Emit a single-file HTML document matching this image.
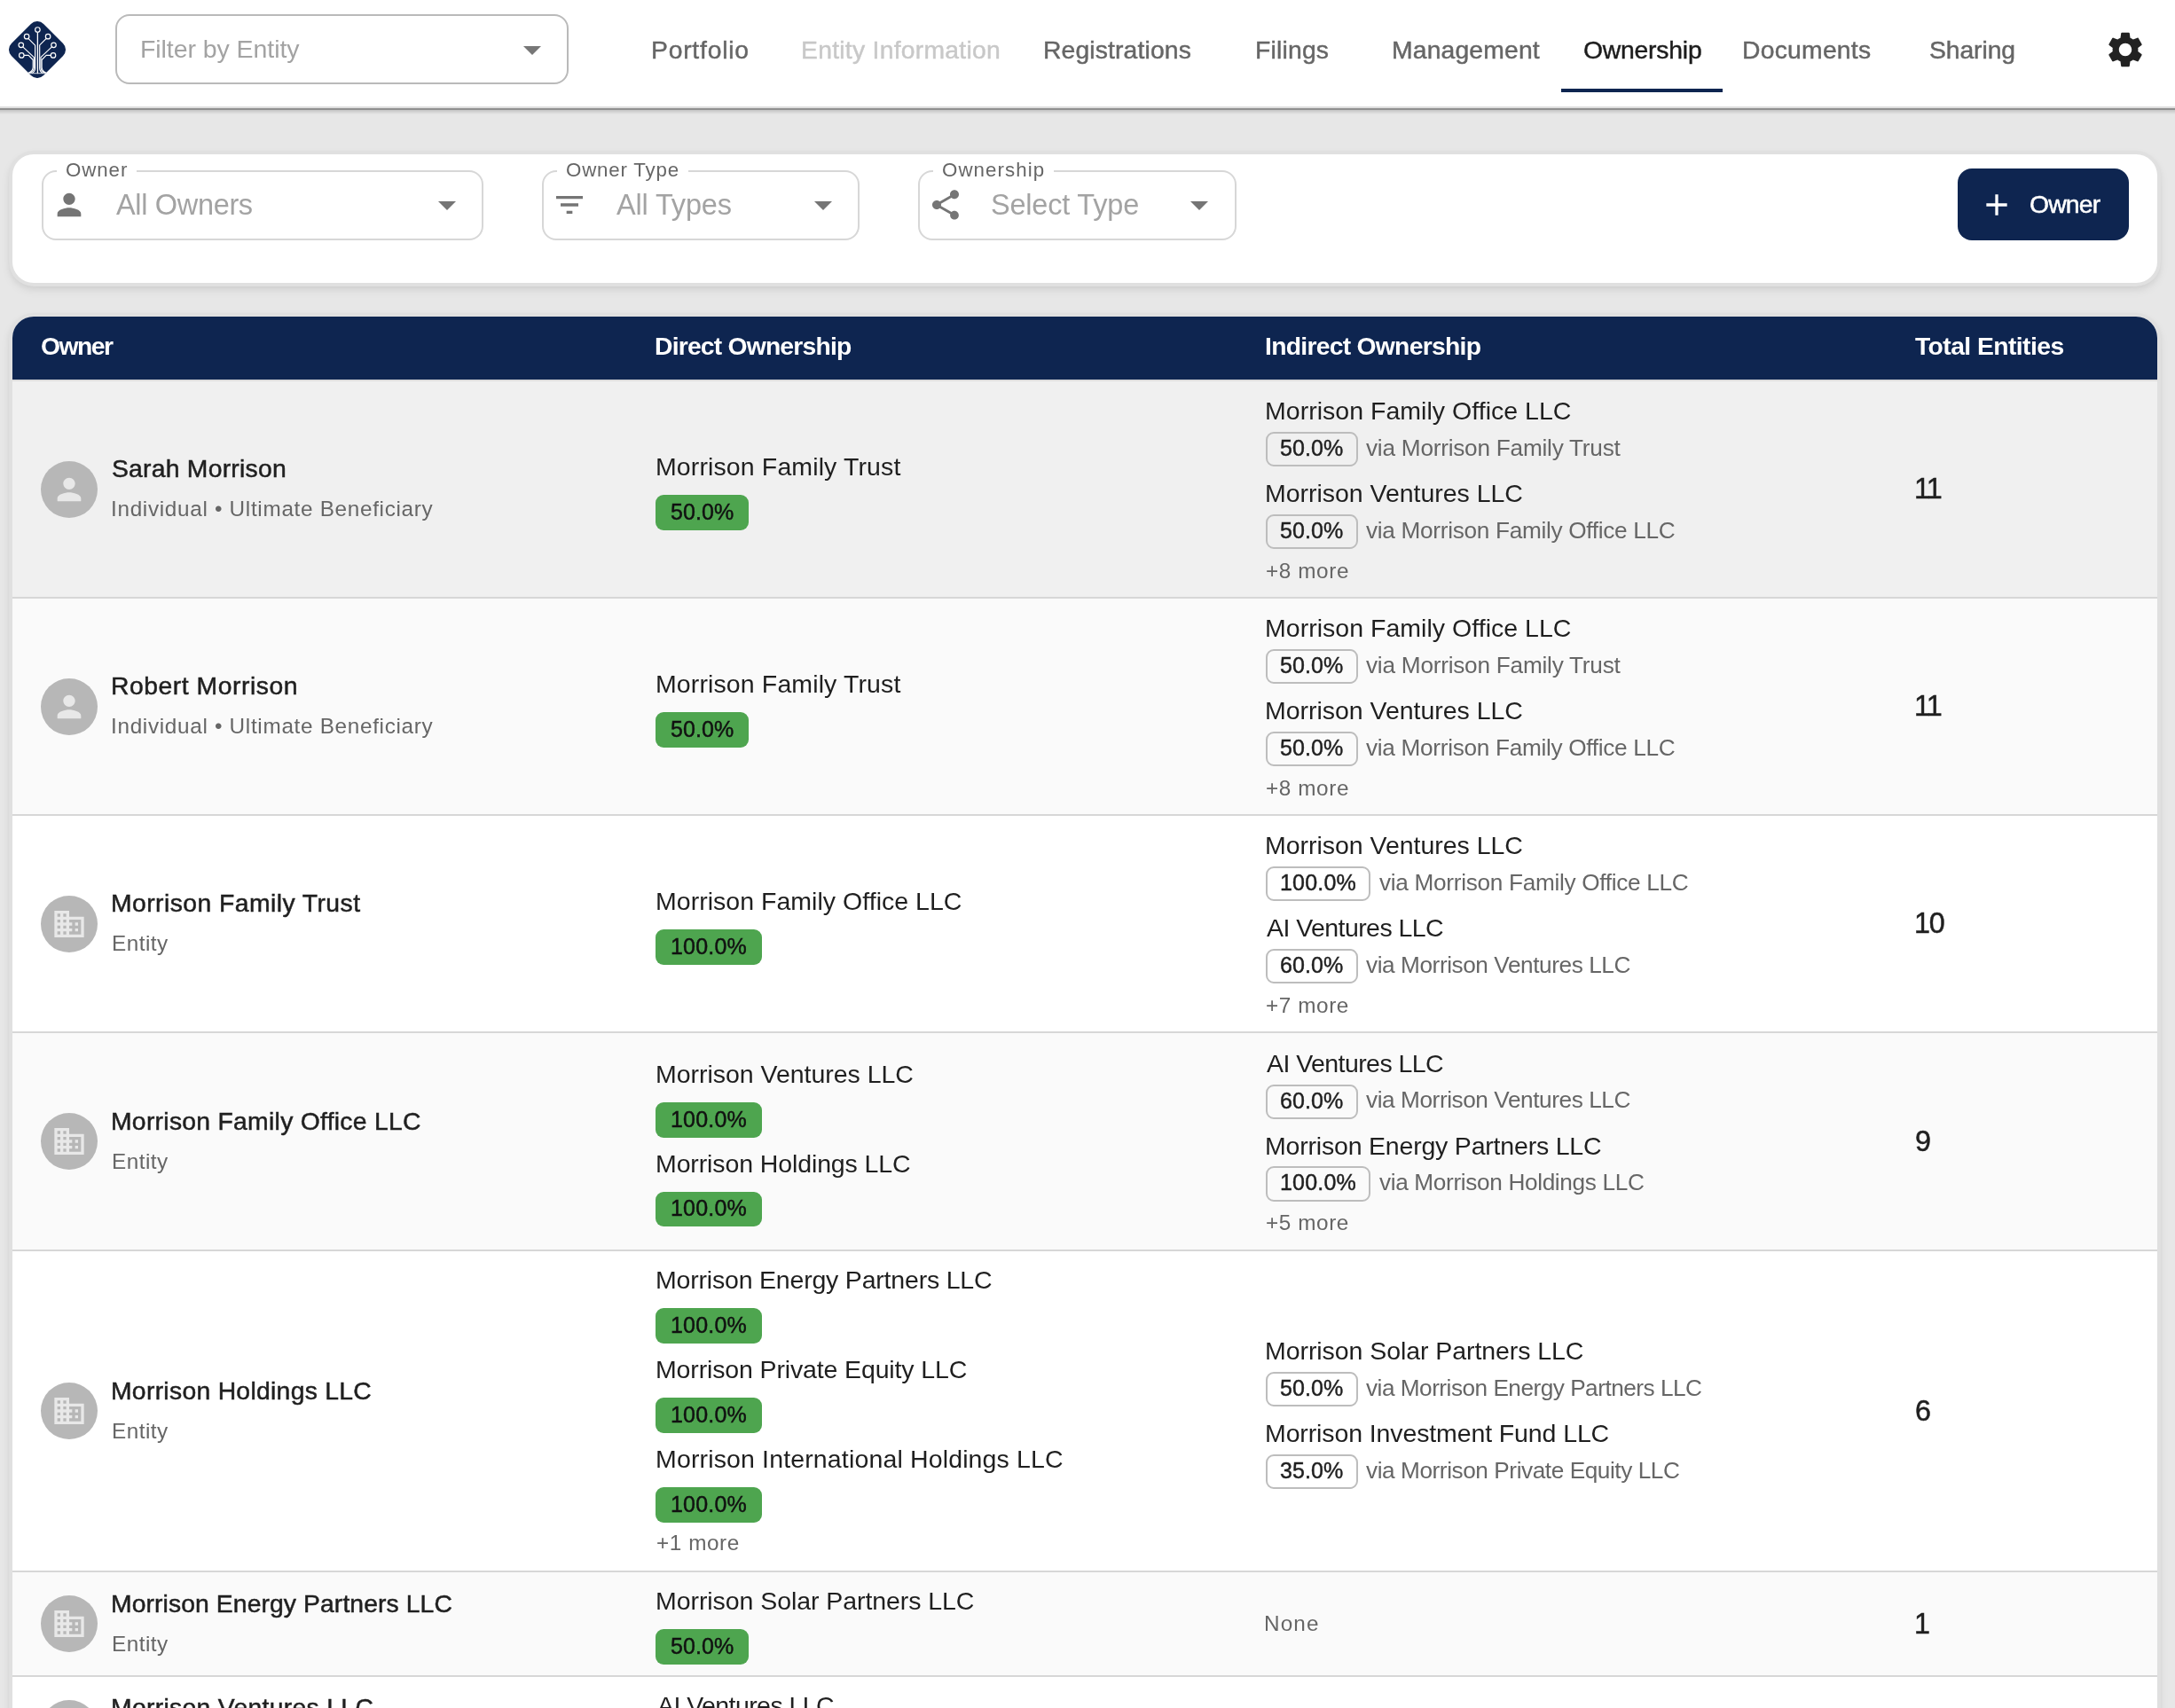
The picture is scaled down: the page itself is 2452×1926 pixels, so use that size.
<!DOCTYPE html><html><head><meta charset="utf-8"><style>html,body{margin:0;padding:0}
body{width:2452px;height:1926px;overflow:hidden;position:relative;background:#e7e7e7;font-family:"Liberation Sans",sans-serif}
.t{position:absolute;line-height:1;white-space:nowrap;transform-origin:0 0;will-change:transform}
.abs{position:absolute}
.hdr{position:absolute;left:0;top:0;width:2452px;height:120px;background:#fff}
.hline1{position:absolute;left:0;top:120px;width:2452px;height:2px;background:#dedede}
.hline2{position:absolute;left:0;top:122px;width:2452px;height:2px;background:#8f8f8f}
.hline3{position:absolute;left:0;top:124px;width:2452px;height:5px;background:linear-gradient(#c4c4c4,#e7e7e7)}
.fbox{position:absolute;box-sizing:border-box;border:2px solid #bababa;border-radius:16px;background:#fff}
.sbox{position:absolute;box-sizing:border-box;border:2px solid #d7d7d7;border-radius:16px;background:#fff}
.notch{position:absolute;height:6px;background:#fff}
.icon{position:absolute}
.card{position:absolute;left:14px;top:174px;width:2418px;height:145px;background:#fff;border-radius:24px;box-shadow:0 0 0 4px #e0e0e0,0 5px 12px 3px rgba(0,0,0,0.07),0 3px 6px 3px rgba(0,0,0,0.05)}
.btn{position:absolute;left:2207px;top:190px;width:193px;height:80.5px;background:#0e2550;border-radius:16px}
.tpaper{position:absolute;left:14px;top:357px;width:2418px;height:1600px;background:#fff;border-radius:24px 24px 0 0;box-shadow:0 0 0 4px #e0e0e0,0 5px 12px 3px rgba(0,0,0,0.07),0 3px 6px 3px rgba(0,0,0,0.05)}
.thead{position:absolute;left:14px;top:357px;width:2418px;height:70.5px;background:#0e2550;border-radius:24px 24px 0 0}
.theadline{position:absolute;left:14px;top:427.5px;width:2418px;height:2.5px;background:#dcdcdc}
.row{position:absolute;left:14px;width:2418px}
.rowline{position:absolute;left:14px;width:2418px;height:2px;background:#d7d7d7}
.av{position:absolute;width:64px;height:64px;border-radius:50%;background:#b7b7b7;display:flex;align-items:center;justify-content:center}
.av svg{fill:#e8e8e8;display:block}
.chipg{position:absolute;height:39.6px;background:#4ea54f;border-radius:9px}
.chipo{position:absolute;height:39.2px;box-sizing:border-box;border:2px solid #bdbdbd;border-radius:9px}
@media (max-width:1300px){html{zoom:0.5}}
.xtab{font-size:28.3px;font-weight:400;-webkit-text-stroke:0.45px currentColor;color:#666666}
.xtabsel{font-size:28.3px;font-weight:400;-webkit-text-stroke:0.45px currentColor;color:#1c1c1c}
.xtabdis{font-size:28.3px;font-weight:400;-webkit-text-stroke:0.45px currentColor;color:#c8c8c8}
.xph{font-size:28.5px;font-weight:400;color:#a3a3a3}
.xselval{font-size:32.5px;font-weight:400;color:#a3a3a3}
.xlabel{font-size:22.3px;font-weight:400;color:#666666}
.xbtn{font-size:28.3px;font-weight:400;-webkit-text-stroke:0.5px currentColor;color:#ffffff}
.xth{font-size:28.3px;font-weight:700;color:#ffffff}
.xname{font-size:28.3px;font-weight:400;-webkit-text-stroke:0.5px currentColor;color:#1f1f1f}
.xsub{font-size:24.3px;font-weight:400;color:#666666}
.xent{font-size:28.5px;font-weight:400;color:#1f1f1f}
.xchip{font-size:25px;font-weight:400;-webkit-text-stroke:0.45px currentColor;color:#111111}
.xchipo{font-size:25px;font-weight:400;-webkit-text-stroke:0.45px currentColor;color:#1f1f1f}
.xvia{font-size:26.2px;font-weight:400;color:#666666}
.xmore{font-size:24.3px;font-weight:400;color:#666666}
.xtotal{font-size:32.3px;font-weight:400;-webkit-text-stroke:0.5px currentColor;color:#1f1f1f}
.xnone{font-size:24.3px;font-weight:400;color:#666666}
</style></head><body><div class="hdr"></div><div class="hline1"></div><div class="hline2"></div><div class="hline3"></div>
<svg class="icon" style="left:10px;top:24px" width="64" height="64" viewBox="0 0 64 64">
  <rect x="6.44" y="6.44" width="51.12" height="51.12" rx="10" transform="rotate(45 32 32)" fill="#0e2550"/>
  <g fill="none" stroke="#fff" stroke-width="1.15" stroke-linecap="round" stroke-linejoin="round">
    <path d="M32.4 12.7V58.6" stroke-width="1.3"/>
    <path d="M21.9 19.3L29.6 27.1V53Q29.6 56.6 26.2 58.4"/>
    <path d="M42.2 19.3L34.7 26.9V53Q34.7 56.6 38 58.4"/>
    <path d="M15.8 28.9L28.3 40.6V52.5Q28.1 56.6 23.5 58.3"/>
    <path d="M48.4 28.9L36 40.6V52.5Q36.2 56.6 40.8 58.3"/>
    <path d="M17.2 38.4H22.2L27.2 43.5V52Q26.8 56.6 21.8 58.2"/>
    <path d="M46.9 38.4H42.1L37.1 43.5V52Q37.5 56.6 42.4 58.2"/>
  </g>
  <path d="M21.5 58.7H42.7" stroke="#dfe3ea" stroke-width="0.9"/>
  <g fill="#0e2550" stroke="#fff" stroke-width="1.2">
    <circle cx="32.4" cy="9.5" r="2.75"/>
    <circle cx="20.1" cy="17.2" r="2.75"/><circle cx="44.1" cy="17.2" r="2.75"/>
    <circle cx="13.8" cy="26.8" r="2.75"/><circle cx="50.5" cy="26.8" r="2.75"/>
    <circle cx="14.3" cy="38.4" r="2.75"/><circle cx="50" cy="38.4" r="2.75"/>
  </g>
</svg>
<div class="fbox" style="left:130.3px;top:16.2px;width:510.7px;height:79.3px"></div>
<svg class="icon" style="left:576px;top:31.5px" width="48" height="48" viewBox="0 0 24 24"><path d="M7 10l5 5 5-5z" fill="#777"/></svg>
<div class="abs" style="left:1760px;top:100px;width:182px;height:4px;background:#0e2550"></div>
<svg class="icon" style="left:2372px;top:31.8px" width="48" height="48" viewBox="0 0 24 24"><path fill="#222" d="M19.14 12.94c.04-.3.06-.61.06-.94 0-.32-.02-.64-.07-.94l2.03-1.58c.18-.14.23-.41.12-.61l-1.92-3.32c-.12-.22-.37-.29-.59-.22l-2.39.96c-.5-.38-1.03-.7-1.62-.94l-.36-2.54c-.04-.24-.24-.41-.48-.41h-3.84c-.24 0-.43.17-.47.41l-.36 2.54c-.59.24-1.13.57-1.62.94l-2.39-.96c-.22-.08-.47 0-.59.22L2.74 8.87c-.12.21-.08.47.12.61l2.03 1.58c-.05.3-.09.63-.09.94s.02.64.07.94l-2.03 1.58c-.18.14-.23.41-.12.61l1.92 3.32c.12.22.37.29.59.22l2.39-.96c.5.38 1.03.7 1.62.94l.36 2.54c.05.24.24.41.48.41h3.840c.24 0 .44-.17.47-.41l.36-2.54c.59-.24 1.13-.56 1.62-.94l2.39.96c.22.08.47 0 .59-.22l1.92-3.32c.12-.22.07-.47-.12-.61l-2.01-1.58zM12 15.6c-1.98 0-3.6-1.62-3.6-3.6s1.62-3.6 3.6-3.6 3.6 1.62 3.6 3.6-1.62 3.6-3.6 3.6z"/></svg>

<div class="card"></div>
<div class="sbox" style="left:46.5px;top:191.5px;width:498.6px;height:79px"></div>
<div class="notch" style="left:64px;top:189px;width:90px"></div>
<div class="sbox" style="left:610.8px;top:191.5px;width:358.7px;height:79px"></div>
<div class="notch" style="left:628px;top:189px;width:148px"></div>
<div class="sbox" style="left:1034.6px;top:191.5px;width:359px;height:79px"></div>
<div class="notch" style="left:1052px;top:189px;width:136.3px"></div>
<svg class="icon" style="left:57.75px;top:211px" width="40" height="40" viewBox="0 0 24 24"><path fill="#757575" d="M12 12c2.21 0 4-1.79 4-4s-1.79-4-4-4-4 1.79-4 4 1.79 4 4 4zm0 2c-2.67 0-8 1.34-8 4v2h16v-2c0-2.66-5.33-4-8-4z"/></svg>
<svg class="icon" style="left:622px;top:211px" width="40" height="40" viewBox="0 0 24 24"><path fill="#757575" d="M10 18h4v-2h-4v2zM3 6v2h18V6H3zm3 7h12v-2H6v2z"/></svg>
<svg class="icon" style="left:1046px;top:211px" width="40" height="40" viewBox="0 0 24 24"><path fill="#757575" d="M18 16.08c-.76 0-1.44.3-1.96.77L8.91 12.7c.05-.23.09-.46.09-.7s-.04-.47-.09-.7l7.05-4.11c.54.5 1.250.81 2.040.81 1.66 0 3-1.34 3-3s-1.34-3-3-3-3 1.34-3 3c0 .24.04.47.09.7L8.04 9.81C7.5 9.31 6.79 9 6 9c-1.66 0-3 1.34-3 3s1.34 3 3 3c.79 0 1.5-.31 2.04-.81l7.12 4.16c-.05.21-.08.43-.08.65 0 1.61 1.31 2.92 2.92 2.920 1.61 0 2.92-1.31 2.92-2.92s-1.31-2.92-2.92-2.92z"/></svg>
<svg class="icon" style="left:480px;top:207px" width="48" height="48" viewBox="0 0 24 24"><path d="M7 10l5 5 5-5z" fill="#757575"/></svg>
<svg class="icon" style="left:904px;top:207px" width="48" height="48" viewBox="0 0 24 24"><path d="M7 10l5 5 5-5z" fill="#757575"/></svg>
<svg class="icon" style="left:1328px;top:207px" width="48" height="48" viewBox="0 0 24 24"><path d="M7 10l5 5 5-5z" fill="#757575"/></svg>
<div class="btn"></div>
<svg class="icon" style="left:2231px;top:211px" width="40" height="40" viewBox="0 0 24 24"><path fill="#fff" d="M19 13h-6v6h-2v-6H5v-2h6V5h2v6h6v2z"/></svg>

<div class="tpaper"></div>
<div class="thead"></div>
<div class="theadline"></div>
<div class="row" style="top:430px;height:243px;background:#f0f0f0"></div><div class="rowline" style="top:673px"></div><div class="av" style="left:46px;top:519.5px"><svg width="40" height="40" viewBox="0 0 24 24"><path d="M12 12c2.21 0 4-1.79 4-4s-1.79-4-4-4-4 1.79-4 4 1.79 4 4 4zm0 2c-2.67 0-8 1.34-8 4v2h16v-2c0-2.66-5.33-4-8-4z"/></svg></div><div class="chipg" style="left:739.1px;top:557.95px;width:105.3px"></div><div class="chipo" style="left:1427.2px;top:487.25px;width:103.6px"></div><div class="chipo" style="left:1427.2px;top:579.85px;width:103.6px"></div><div class="row" style="top:675px;height:243px;background:#fafafa"></div><div class="rowline" style="top:918px"></div><div class="av" style="left:46px;top:764.5px"><svg width="40" height="40" viewBox="0 0 24 24"><path d="M12 12c2.21 0 4-1.79 4-4s-1.79-4-4-4-4 1.79-4 4 1.79 4 4 4zm0 2c-2.67 0-8 1.34-8 4v2h16v-2c0-2.66-5.33-4-8-4z"/></svg></div><div class="chipg" style="left:739.1px;top:802.95px;width:105.3px"></div><div class="chipo" style="left:1427.2px;top:732.25px;width:103.6px"></div><div class="chipo" style="left:1427.2px;top:824.85px;width:103.6px"></div><div class="row" style="top:920px;height:243px;background:#ffffff"></div><div class="rowline" style="top:1163px"></div><div class="av" style="left:46px;top:1009.5px"><svg width="40" height="40" viewBox="0 0 24 24"><path d="M12 7V3H2v18h20V7H12zM6 19H4v-2h2v2zm0-4H4v-2h2v2zm0-4H4V9h2v2zm0-4H4V5h2v2zm4 12H8v-2h2v2zm0-4H8v-2h2v2zm0-4H8V9h2v2zm0-4H8V5h2v2zm10 12h-8v-2h2v-2h-2v-2h2v-2h-2V9h8v10zm-2-8h-2v2h2v-2zm0 4h-2v2h2v-2z"/></svg></div><div class="chipg" style="left:739.1px;top:1047.95px;width:119.9px"></div><div class="chipo" style="left:1427.2px;top:977.25px;width:118.2px"></div><div class="chipo" style="left:1427.2px;top:1069.85px;width:103.6px"></div><div class="row" style="top:1165px;height:244px;background:#fafafa"></div><div class="rowline" style="top:1409px"></div><div class="av" style="left:46px;top:1255.0px"><svg width="40" height="40" viewBox="0 0 24 24"><path d="M12 7V3H2v18h20V7H12zM6 19H4v-2h2v2zm0-4H4v-2h2v2zm0-4H4V9h2v2zm0-4H4V5h2v2zm4 12H8v-2h2v2zm0-4H8v-2h2v2zm0-4H8V9h2v2zm0-4H8V5h2v2zm10 12h-8v-2h2v-2h-2v-2h2v-2h-2V9h8v10zm-2-8h-2v2h2v-2zm0 4h-2v2h2v-2z"/></svg></div><div class="chipg" style="left:739.1px;top:1243.05px;width:119.9px"></div><div class="chipg" style="left:739.1px;top:1343.85px;width:119.9px"></div><div class="chipo" style="left:1427.2px;top:1222.75px;width:103.6px"></div><div class="chipo" style="left:1427.2px;top:1315.35px;width:118.2px"></div><div class="row" style="top:1411px;height:360px;background:#ffffff"></div><div class="rowline" style="top:1771px"></div><div class="av" style="left:46px;top:1559.0px"><svg width="40" height="40" viewBox="0 0 24 24"><path d="M12 7V3H2v18h20V7H12zM6 19H4v-2h2v2zm0-4H4v-2h2v2zm0-4H4V9h2v2zm0-4H4V5h2v2zm4 12H8v-2h2v2zm0-4H8v-2h2v2zm0-4H8V9h2v2zm0-4H8V5h2v2zm10 12h-8v-2h2v-2h-2v-2h2v-2h-2V9h8v10zm-2-8h-2v2h2v-2zm0 4h-2v2h2v-2z"/></svg></div><div class="chipg" style="left:739.1px;top:1475.40px;width:119.9px"></div><div class="chipg" style="left:739.1px;top:1576.20px;width:119.9px"></div><div class="chipg" style="left:739.1px;top:1677.00px;width:119.9px"></div><div class="chipo" style="left:1427.2px;top:1547.20px;width:103.6px"></div><div class="chipo" style="left:1427.2px;top:1639.80px;width:103.6px"></div><div class="row" style="top:1773px;height:116px;background:#fafafa"></div><div class="rowline" style="top:1889px"></div><div class="av" style="left:46px;top:1799.0px"><svg width="40" height="40" viewBox="0 0 24 24"><path d="M12 7V3H2v18h20V7H12zM6 19H4v-2h2v2zm0-4H4v-2h2v2zm0-4H4V9h2v2zm0-4H4V5h2v2zm4 12H8v-2h2v2zm0-4H8v-2h2v2zm0-4H8V9h2v2zm0-4H8V5h2v2zm10 12h-8v-2h2v-2h-2v-2h2v-2h-2V9h8v10zm-2-8h-2v2h2v-2zm0 4h-2v2h2v-2z"/></svg></div><div class="chipg" style="left:739.1px;top:1837.45px;width:105.3px"></div><div class="row" style="top:1891px;height:117px;background:#ffffff"></div><div class="rowline" style="top:2008px"></div><div class="av" style="left:46px;top:1916.5px"><svg width="40" height="40" viewBox="0 0 24 24"><path d="M12 7V3H2v18h20V7H12zM6 19H4v-2h2v2zm0-4H4v-2h2v2zm0-4H4V9h2v2zm0-4H4V5h2v2zm4 12H8v-2h2v2zm0-4H8v-2h2v2zm0-4H8V9h2v2zm0-4H8V5h2v2zm10 12h-8v-2h2v-2h-2v-2h2v-2h-2V9h8v10zm-2-8h-2v2h2v-2zm0 4h-2v2h2v-2z"/></svg></div><div class="chipg" style="left:739.1px;top:1954.95px;width:105.3px"></div><div class="t xph" style="left:157.70px;top:41.20px;letter-spacing:-0.067px">Filter by Entity</div><div class="t xtab" style="left:734.40px;top:41.70px;letter-spacing:0.775px">Portfolio</div><div class="t xtabdis" style="left:903.40px;top:41.70px;letter-spacing:0.271px">Entity Information</div><div class="t xtab" style="left:1175.80px;top:41.70px;letter-spacing:0.142px">Registrations</div><div class="t xtab" style="left:1414.80px;top:41.70px;letter-spacing:0.200px">Filings</div><div class="t xtab" style="left:1569.20px;top:41.70px;letter-spacing:0.167px">Management</div><div class="t xtabsel" style="left:1784.60px;top:41.70px;letter-spacing:-0.200px">Ownership</div><div class="t xtab" style="left:1964.00px;top:41.70px;letter-spacing:0.250px">Documents</div><div class="t xtab" style="left:2174.60px;top:41.70px;letter-spacing:-0.083px">Sharing</div><div class="t xlabel" style="left:74.10px;top:180.70px;letter-spacing:0.925px">Owner</div><div class="t xlabel" style="left:638.30px;top:180.70px;letter-spacing:0.811px">Owner Type</div><div class="t xlabel" style="left:1062.10px;top:180.70px;letter-spacing:1.062px">Ownership</div><div class="t xselval" style="left:130.80px;top:214.80px;letter-spacing:-0.333px">All Owners</div><div class="t xselval" style="left:694.90px;top:215.00px;letter-spacing:-0.163px">All Types</div><div class="t xselval" style="left:1117.30px;top:215.00px;letter-spacing:-0.200px">Select Type</div><div class="t xbtn" style="left:2287.75px;top:216.00px;letter-spacing:-0.812px">Owner</div><div class="t xth" style="left:45.90px;top:376.30px;letter-spacing:-1.500px">Owner</div><div class="t xth" style="left:738.30px;top:376.30px;letter-spacing:-0.800px">Direct Ownership</div><div class="t xth" style="left:1425.60px;top:376.30px;letter-spacing:-0.724px">Indirect Ownership</div><div class="t xth" style="left:2158.90px;top:376.20px;letter-spacing:-0.569px">Total Entities</div><div class="t xname" style="left:125.90px;top:514.25px;letter-spacing:0.246px">Sarah Morrison</div><div class="t xsub" style="left:124.90px;top:562.40px;letter-spacing:0.688px">Individual • Ultimate Beneficiary</div><div class="t xent" style="left:739.00px;top:511.95px;letter-spacing:0.120px">Morrison Family Trust</div><div class="t xchip" style="left:756.10px;top:564.50px;letter-spacing:0.075px">50.0%</div><div class="t xent" style="left:1425.70px;top:449.45px;letter-spacing:0.028px">Morrison Family Office LLC</div><div class="t xchipo" style="left:1442.80px;top:493.25px;letter-spacing:0.075px">50.0%</div><div class="t xvia" style="left:1540.40px;top:491.95px;letter-spacing:-0.237px">via Morrison Family Trust</div><div class="t xent" style="left:1425.70px;top:542.05px;letter-spacing:-0.030px">Morrison Ventures LLC</div><div class="t xchipo" style="left:1442.80px;top:585.85px;letter-spacing:0.075px">50.0%</div><div class="t xvia" style="left:1540.40px;top:584.55px;letter-spacing:-0.303px">via Morrison Family Office LLC</div><div class="t xmore" style="left:1426.70px;top:631.85px;letter-spacing:0.600px">+8 more</div><div class="t xtotal" style="left:2158.20px;top:535.00px;letter-spacing:-1.700px">11</div><div class="t xname" style="left:124.90px;top:759.25px;letter-spacing:0.543px">Robert Morrison</div><div class="t xsub" style="left:124.90px;top:807.40px;letter-spacing:0.688px">Individual • Ultimate Beneficiary</div><div class="t xent" style="left:739.00px;top:756.95px;letter-spacing:0.120px">Morrison Family Trust</div><div class="t xchip" style="left:756.10px;top:809.50px;letter-spacing:0.075px">50.0%</div><div class="t xent" style="left:1425.70px;top:694.45px;letter-spacing:0.028px">Morrison Family Office LLC</div><div class="t xchipo" style="left:1442.80px;top:738.25px;letter-spacing:0.075px">50.0%</div><div class="t xvia" style="left:1540.40px;top:736.95px;letter-spacing:-0.237px">via Morrison Family Trust</div><div class="t xent" style="left:1425.70px;top:787.05px;letter-spacing:-0.030px">Morrison Ventures LLC</div><div class="t xchipo" style="left:1442.80px;top:830.85px;letter-spacing:0.075px">50.0%</div><div class="t xvia" style="left:1540.40px;top:829.55px;letter-spacing:-0.303px">via Morrison Family Office LLC</div><div class="t xmore" style="left:1426.70px;top:876.85px;letter-spacing:0.600px">+8 more</div><div class="t xtotal" style="left:2158.20px;top:780.00px;letter-spacing:-1.700px">11</div><div class="t xname" style="left:124.90px;top:1004.25px;letter-spacing:0.450px">Morrison Family Trust</div><div class="t xsub" style="left:125.60px;top:1052.40px;letter-spacing:0.500px">Entity</div><div class="t xent" style="left:739.00px;top:1001.95px;letter-spacing:0.028px">Morrison Family Office LLC</div><div class="t xchip" style="left:756.10px;top:1054.50px;letter-spacing:0.180px">100.0%</div><div class="t xent" style="left:1425.70px;top:939.45px;letter-spacing:-0.030px">Morrison Ventures LLC</div><div class="t xchipo" style="left:1442.80px;top:983.25px;letter-spacing:0.180px">100.0%</div><div class="t xvia" style="left:1555.00px;top:981.95px;letter-spacing:-0.303px">via Morrison Family Office LLC</div><div class="t xent" style="left:1427.70px;top:1032.05px;letter-spacing:-0.571px">AI Ventures LLC</div><div class="t xchipo" style="left:1442.80px;top:1075.85px;letter-spacing:0.075px">60.0%</div><div class="t xvia" style="left:1540.40px;top:1074.55px;letter-spacing:-0.425px">via Morrison Ventures LLC</div><div class="t xmore" style="left:1426.70px;top:1121.85px;letter-spacing:0.594px">+7 more</div><div class="t xtotal" style="left:2158.20px;top:1025.00px;letter-spacing:-1.333px">10</div><div class="t xname" style="left:124.90px;top:1249.75px;letter-spacing:0.288px">Morrison Family Office LLC</div><div class="t xsub" style="left:125.60px;top:1297.90px;letter-spacing:0.500px">Entity</div><div class="t xent" style="left:739.00px;top:1197.05px;letter-spacing:-0.030px">Morrison Ventures LLC</div><div class="t xchip" style="left:756.10px;top:1249.60px;letter-spacing:0.180px">100.0%</div><div class="t xent" style="left:739.00px;top:1297.85px;letter-spacing:-0.113px">Morrison Holdings LLC</div><div class="t xchip" style="left:756.10px;top:1350.40px;letter-spacing:0.180px">100.0%</div><div class="t xent" style="left:1427.70px;top:1184.95px;letter-spacing:-0.571px">AI Ventures LLC</div><div class="t xchipo" style="left:1442.80px;top:1228.75px;letter-spacing:0.075px">60.0%</div><div class="t xvia" style="left:1540.40px;top:1227.45px;letter-spacing:-0.425px">via Morrison Ventures LLC</div><div class="t xent" style="left:1425.70px;top:1277.55px;letter-spacing:-0.196px">Morrison Energy Partners LLC</div><div class="t xchipo" style="left:1442.80px;top:1321.35px;letter-spacing:0.180px">100.0%</div><div class="t xvia" style="left:1555.00px;top:1320.05px;letter-spacing:-0.346px">via Morrison Holdings LLC</div><div class="t xmore" style="left:1426.70px;top:1367.35px;letter-spacing:0.594px">+5 more</div><div class="t xtotal" style="left:2159.20px;top:1270.50px;letter-spacing:-1.333px">9</div><div class="t xname" style="left:124.90px;top:1553.75px;letter-spacing:0.300px">Morrison Holdings LLC</div><div class="t xsub" style="left:125.60px;top:1601.90px;letter-spacing:0.500px">Entity</div><div class="t xent" style="left:739.00px;top:1429.40px;letter-spacing:-0.196px">Morrison Energy Partners LLC</div><div class="t xchip" style="left:756.10px;top:1481.95px;letter-spacing:0.180px">100.0%</div><div class="t xent" style="left:739.00px;top:1530.20px;letter-spacing:-0.138px">Morrison Private Equity LLC</div><div class="t xchip" style="left:756.10px;top:1582.75px;letter-spacing:0.180px">100.0%</div><div class="t xent" style="left:739.00px;top:1631.00px;letter-spacing:0.147px">Morrison International Holdings LLC</div><div class="t xchip" style="left:756.10px;top:1683.55px;letter-spacing:0.180px">100.0%</div><div class="t xmore" style="left:739.70px;top:1728.10px;letter-spacing:0.583px">+1 more</div><div class="t xent" style="left:1425.70px;top:1509.40px;letter-spacing:-0.065px">Morrison Solar Partners LLC</div><div class="t xchipo" style="left:1442.80px;top:1553.20px;letter-spacing:0.075px">50.0%</div><div class="t xvia" style="left:1540.40px;top:1551.90px;letter-spacing:-0.500px">via Morrison Energy Partners LLC</div><div class="t xent" style="left:1425.70px;top:1602.00px;letter-spacing:-0.113px">Morrison Investment Fund LLC</div><div class="t xchipo" style="left:1442.80px;top:1645.80px;letter-spacing:0.075px">35.0%</div><div class="t xvia" style="left:1540.40px;top:1644.50px;letter-spacing:-0.430px">via Morrison Private Equity LLC</div><div class="t xtotal" style="left:2159.20px;top:1574.50px;letter-spacing:-0.600px">6</div><div class="t xname" style="left:124.90px;top:1793.75px;letter-spacing:0.100px">Morrison Energy Partners LLC</div><div class="t xsub" style="left:125.60px;top:1841.90px;letter-spacing:0.500px">Entity</div><div class="t xent" style="left:739.00px;top:1791.45px;letter-spacing:-0.065px">Morrison Solar Partners LLC</div><div class="t xchip" style="left:756.10px;top:1844.00px;letter-spacing:0.075px">50.0%</div><div class="t xnone" style="left:1425.00px;top:1818.60px;letter-spacing:1.133px">None</div><div class="t xtotal" style="left:2158.20px;top:1814.50px;letter-spacing:-1.333px">1</div><div class="t xname" style="left:124.90px;top:1911.25px;letter-spacing:0.321px">Morrison Ventures LLC</div><div class="t xsub" style="left:125.60px;top:1959.40px;letter-spacing:0.500px">Entity</div><div class="t xent" style="left:741.00px;top:1908.95px;letter-spacing:-0.571px">AI Ventures LLC</div><div class="t xchip" style="left:756.10px;top:1961.50px;letter-spacing:0.075px">60.0%</div><div class="t xnone" style="left:1425.00px;top:1936.10px;letter-spacing:1.133px">None</div><div class="t xtotal" style="left:2159.20px;top:1932.00px;letter-spacing:-1.333px">2</div></body></html>
